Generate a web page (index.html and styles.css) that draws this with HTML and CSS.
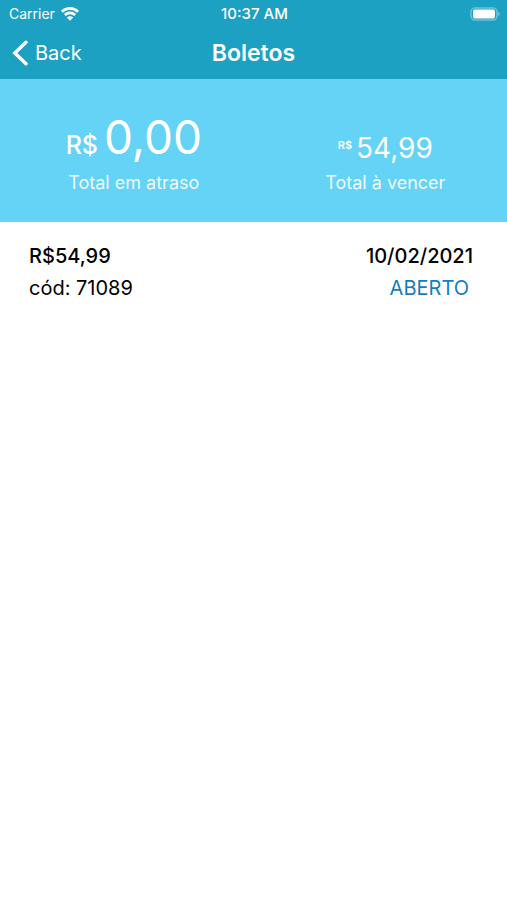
FILE: index.html
```html
<!DOCTYPE html>
<html lang="pt-BR">
<head>
<meta charset="utf-8">
<meta name="viewport" content="width=device-width, initial-scale=1">
<title>Boletos</title>
<link rel="stylesheet" href="styles.css">
</head>
<body>
<header class="top">
  <div class="status">
    <div class="carrier">
      <span>Carrier</span>
      <svg class="wifi" viewBox="0 0 18 14" aria-hidden="true">
        <path d="M.9 4.7a11.6 11.6 0 0 1 16.2 0M3.9 8a7.3 7.3 0 0 1 10.2 0" fill="none" stroke="currentColor" stroke-width="2.6"/>
        <path d="M9 13.8 5.8 10.5a4.6 4.6 0 0 1 6.4 0z" fill="currentColor"/>
      </svg>
    </div>
    <time class="clock">10:37 AM</time>
    <svg class="battery" viewBox="0 0 30 14" aria-hidden="true">
      <rect x="1" y="1" width="26" height="12" rx="4" fill="none" stroke="currentColor" stroke-width="1.6" opacity="0.35"/>
      <rect x="3" y="2.5" width="22" height="9" rx="2" fill="currentColor"/>
      <path d="M28.4 5c1.6.7 1.6 3.3 0 4z" fill="currentColor" opacity="0.5"/>
    </svg>
  </div>
  <nav class="nav">
    <a class="back" href="#">
      <svg class="chevron" viewBox="0 0 16 26" aria-hidden="true"><path d="M14 2.2 2.8 13 14 23.8" fill="none" stroke="currentColor" stroke-width="3.4" stroke-linecap="round"/></svg>
      <span>Back</span>
    </a>
    <h1 class="title">Boletos</h1>
  </nav>
</header>
<main>
  <section class="summary">
    <div class="total">
      <p class="amount amount-large"><span class="currency">R$</span> <span>0,00</span></p>
      <p class="label">Total em atraso</p>
    </div>
    <div class="total">
      <p class="amount amount-small"><span class="currency">R$</span> <span>54,99</span></p>
      <p class="label">Total à vencer</p>
    </div>
  </section>
  <ul class="bills">
    <li class="bill">
      <div class="info">
        <strong>R$54,99</strong>
        <span>cód: 71089</span>
      </div>
      <div class="due">
        <strong>10/02/2021</strong>
        <span class="state">ABERTO</span>
      </div>
    </li>
  </ul>
</main>
</body>
</html>
```
FILE: styles.css
```css
* { box-sizing: border-box; }
body, h1, p, ul { margin: 0; padding: 0; }
body {
  background: #fff;
  color: #000;
  font-family: Inter, "Liberation Sans", sans-serif;
}
.top { background: #1da1c2; color: #fff; }
.status {
  display: grid;
  grid-template-columns: 1fr auto 1fr;
  align-items: center;
  height: 27px;
  padding: 0 7px 0 9px;
  font-size: 14px;
}
.carrier { display: flex; align-items: center; gap: 6px; }
.wifi { width: 18px; height: 14px; }
.clock { font-size: 15px; font-weight: 500; }
.battery { width: 30px; height: 14px; justify-self: end; }
.nav {
  display: grid;
  grid-template-columns: 1fr auto 1fr;
  align-items: center;
  height: 52px;
  padding: 0 12px 1px;
}
.back {
  display: flex;
  align-items: center;
  gap: 7px;
  color: inherit;
  font-size: 20px;
  text-decoration: none;
}
.chevron { width: 16px; height: 26px; }
.title { font-size: 23px; font-weight: 600; }
.summary {
  display: flex;
  justify-content: space-around;
  align-items: flex-end;
  padding: 30px 0 26px 4px;
  background: #64d3f5;
  color: #fff;
}
.total { text-align: center; }
.amount {
  display: flex;
  justify-content: center;
  margin-bottom: 5px;
  white-space: nowrap;
}
.amount-large {
  align-items: baseline;
  gap: 6px;
  font-size: 46px;
  line-height: 56px;
}
.amount-large .currency { font-size: 25px; font-weight: 500; line-height: 30px; }
.amount-small {
  align-items: center;
  gap: 4px;
  font-size: 28px;
  line-height: 34px;
}
.amount-small .currency {
  padding-bottom: 6px;
  font-size: 11px;
  font-weight: 600;
  line-height: 14px;
}
.label { font-size: 18px; line-height: 26px; opacity: 0.9; }
.bills { list-style: none; }
.bill {
  display: flex;
  justify-content: space-between;
  padding: 18px 34px 18px 29px;
  font-size: 20px;
  line-height: 32px;
}
.bill strong { font-weight: 500; }
.info, .due { display: flex; flex-direction: column; }
.due { align-items: flex-end; }
.state { color: #147dbe; padding-right: 4px; }
```
